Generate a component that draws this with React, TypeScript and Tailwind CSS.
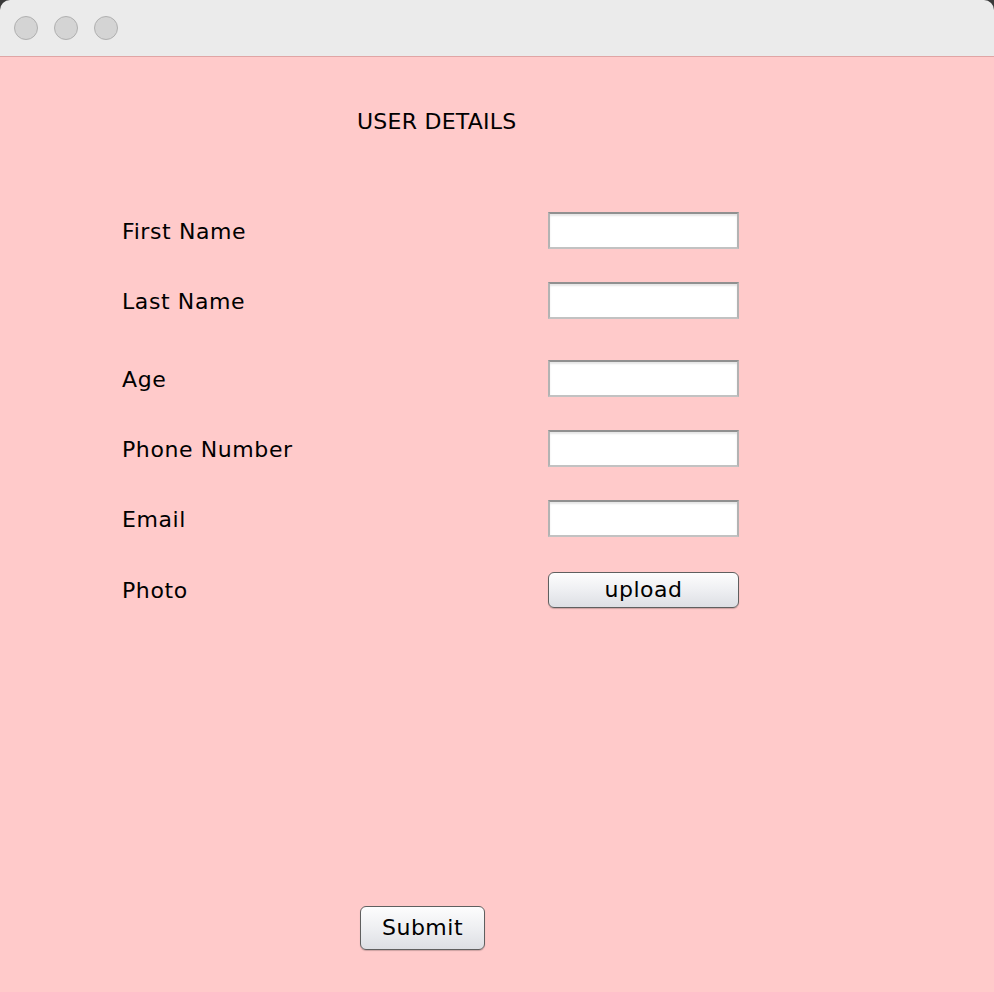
import React from "react";

const fieldCls =
  "w-[191px] h-[37px] bg-white border-2 border-[#b3b3b3] border-t-[#909090] border-b-[#c2c2c2] shadow-[inset_0_2px_2px_rgba(0,0,0,0.1)] outline-none";

const btnCls =
  "rounded-[6px] border-[1.5px] border-[#5f5f5f] bg-gradient-to-b from-[#fdfdfd] via-[#eeeff2] to-[#dddfe4] text-[22px] tracking-[0.5px] text-black leading-none shadow-[0_1px_1px_rgba(0,0,0,0.2)]";

function Row({ label, mt, children }: { label: string; mt: string; children: React.ReactNode }) {
  return (
    <div className={`flex items-center h-[37px] ${mt}`}>
      <div className="w-[426px] text-[22px] tracking-[0.6px] text-black leading-none pt-[2px]">{label}</div>
      {children}
    </div>
  );
}

export default function App() {
  return (
    <div
      className="w-[994px] h-[992px] bg-[#3a3a3a]"
      style={{ fontFamily: '"DejaVu Sans", "Liberation Sans", sans-serif' }}
    >
      <div className="w-full h-full rounded-t-[10px] overflow-hidden flex flex-col">
        <div className="h-[57px] bg-[#ebebeb] border-b border-[#e0a5a5] flex items-center pl-[14px] gap-[16px] shrink-0">
          <div className="w-[24px] h-[24px] rounded-full bg-[#d4d4d4] border border-[#b0b0b0]" />
          <div className="w-[24px] h-[24px] rounded-full bg-[#d4d4d4] border border-[#b0b0b0]" />
          <div className="w-[24px] h-[24px] rounded-full bg-[#d4d4d4] border border-[#b0b0b0]" />
        </div>
        <div className="flex-1 bg-[#ffcaca] flex flex-col pl-[122px]">
          <div className="mt-[53px] h-[24px] flex items-center pl-[235px] text-[22px] tracking-[0.25px] text-black leading-none">
            USER DETAILS
          </div>
          <Row label="First Name" mt="mt-[78px]">
            <input className={fieldCls} />
          </Row>
          <Row label="Last Name" mt="mt-[33px]">
            <input className={fieldCls} />
          </Row>
          <Row label="Age" mt="mt-[41px]">
            <input className={fieldCls} />
          </Row>
          <Row label="Phone Number" mt="mt-[33px]">
            <input className={fieldCls} />
          </Row>
          <Row label="Email" mt="mt-[33px]">
            <input className={fieldCls} />
          </Row>
          <Row label="Photo" mt="mt-[34px]">
            <button className={`w-[191px] h-[36px] ${btnCls}`}>upload</button>
          </Row>
          <div className="mt-[298px] pl-[238px]">
            <button className={`w-[125px] h-[44px] ${btnCls}`}>Submit</button>
          </div>
        </div>
      </div>
    </div>
  );
}
